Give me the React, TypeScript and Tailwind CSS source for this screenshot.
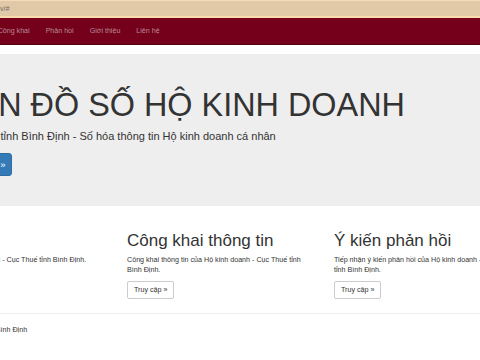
const navItems = ['Trang chủ', 'Công khai', 'Phản hồi', 'Giới thiệu', 'Liên hệ'];

const columns = [
  {
    title: 'Bản đồ số',
    text: 'Bản đồ số Hộ kinh doanh - Cục Thuế tỉnh Bình Định.',
  },
  {
    title: 'Công khai thông tin',
    text: 'Công khai thông tin của Hộ kinh doanh - Cục Thuế tỉnh Bình Định.',
  },
  {
    title: 'Ý kiến phản hồi',
    text: 'Tiếp nhận ý kiến phản hồi của Hộ kinh doanh - Cục Thuế tỉnh Bình Định.',
  },
];

export default function App() {
  return (
    <div className="h-[360px] w-[480px] overflow-hidden bg-white font-['Liberation_Sans',Arial,sans-serif] text-[#333]">
      {/* address strip */}
      <div className="h-[18px] border-t border-b-2 border-t-[#f6dcb6] border-b-[#fbdcae] bg-[#e1c8a6]">
        <p className="pt-[2px] text-[7px] leading-[12px] text-[#6f6a66]">v/#</p>
      </div>

      {/* navbar */}
      <nav className="h-[27px] border-b border-[#55000f] bg-[#74001b]">
        <ul className="-ml-[58px] flex h-full items-center">
          {navItems.map((item) => (
            <li key={item} className="whitespace-nowrap px-[8px] text-[7.1px] leading-[26px] text-[#b88c97]">
              {item}
            </li>
          ))}
        </ul>
      </nav>

      <div className="-ml-[80px] w-[640px]">
        {/* jumbotron */}
        <div className="mt-[9px] h-[152px] bg-[#eeeeee] pl-[35px] pt-[34px]">
          <h1 className="whitespace-nowrap text-[32.4px] leading-[35px]">BẢN ĐỒ SỐ HỘ KINH DOANH</h1>
          <p className="-ml-[5px] mt-[6px] whitespace-nowrap text-[11px] leading-[15px]">
            Cục Thuế tỉnh Bình Định - Số hóa thông tin Hộ kinh doanh cá nhân
          </p>
          <a className="mt-[9px] inline-block rounded-[3px] border border-[#2e6da4] bg-[#337ab7] px-[5px] text-[9.5px] leading-[21px] text-white">
            Truy cập »
          </a>
        </div>

        {/* columns */}
        <div className="flex pt-[25px]">
          {columns.map((col) => (
            <div key={col.title} className="w-[207px]">
              <div className="w-[187px]">
                <h2 className="whitespace-nowrap text-[17px] leading-[19px]">{col.title}</h2>
                <p className="mt-[5px] text-[7.15px] leading-[10px]">{col.text}</p>
                <a className="mt-[5px] inline-block rounded-[2px] border border-[#cccccc] bg-white px-[6px] text-[7.15px] leading-[16px] text-[#333]">
                  Truy cập »
                </a>
              </div>
            </div>
          ))}
        </div>

        {/* footer */}
        <hr className="mt-[14px] border-t border-[#eeeeee]" />
        <p className="pt-[11px] text-[7.15px] leading-[10px] text-[#333]">© 2018 - Cục Thuế tỉnh Bình Định</p>
      </div>
    </div>
  );
}
